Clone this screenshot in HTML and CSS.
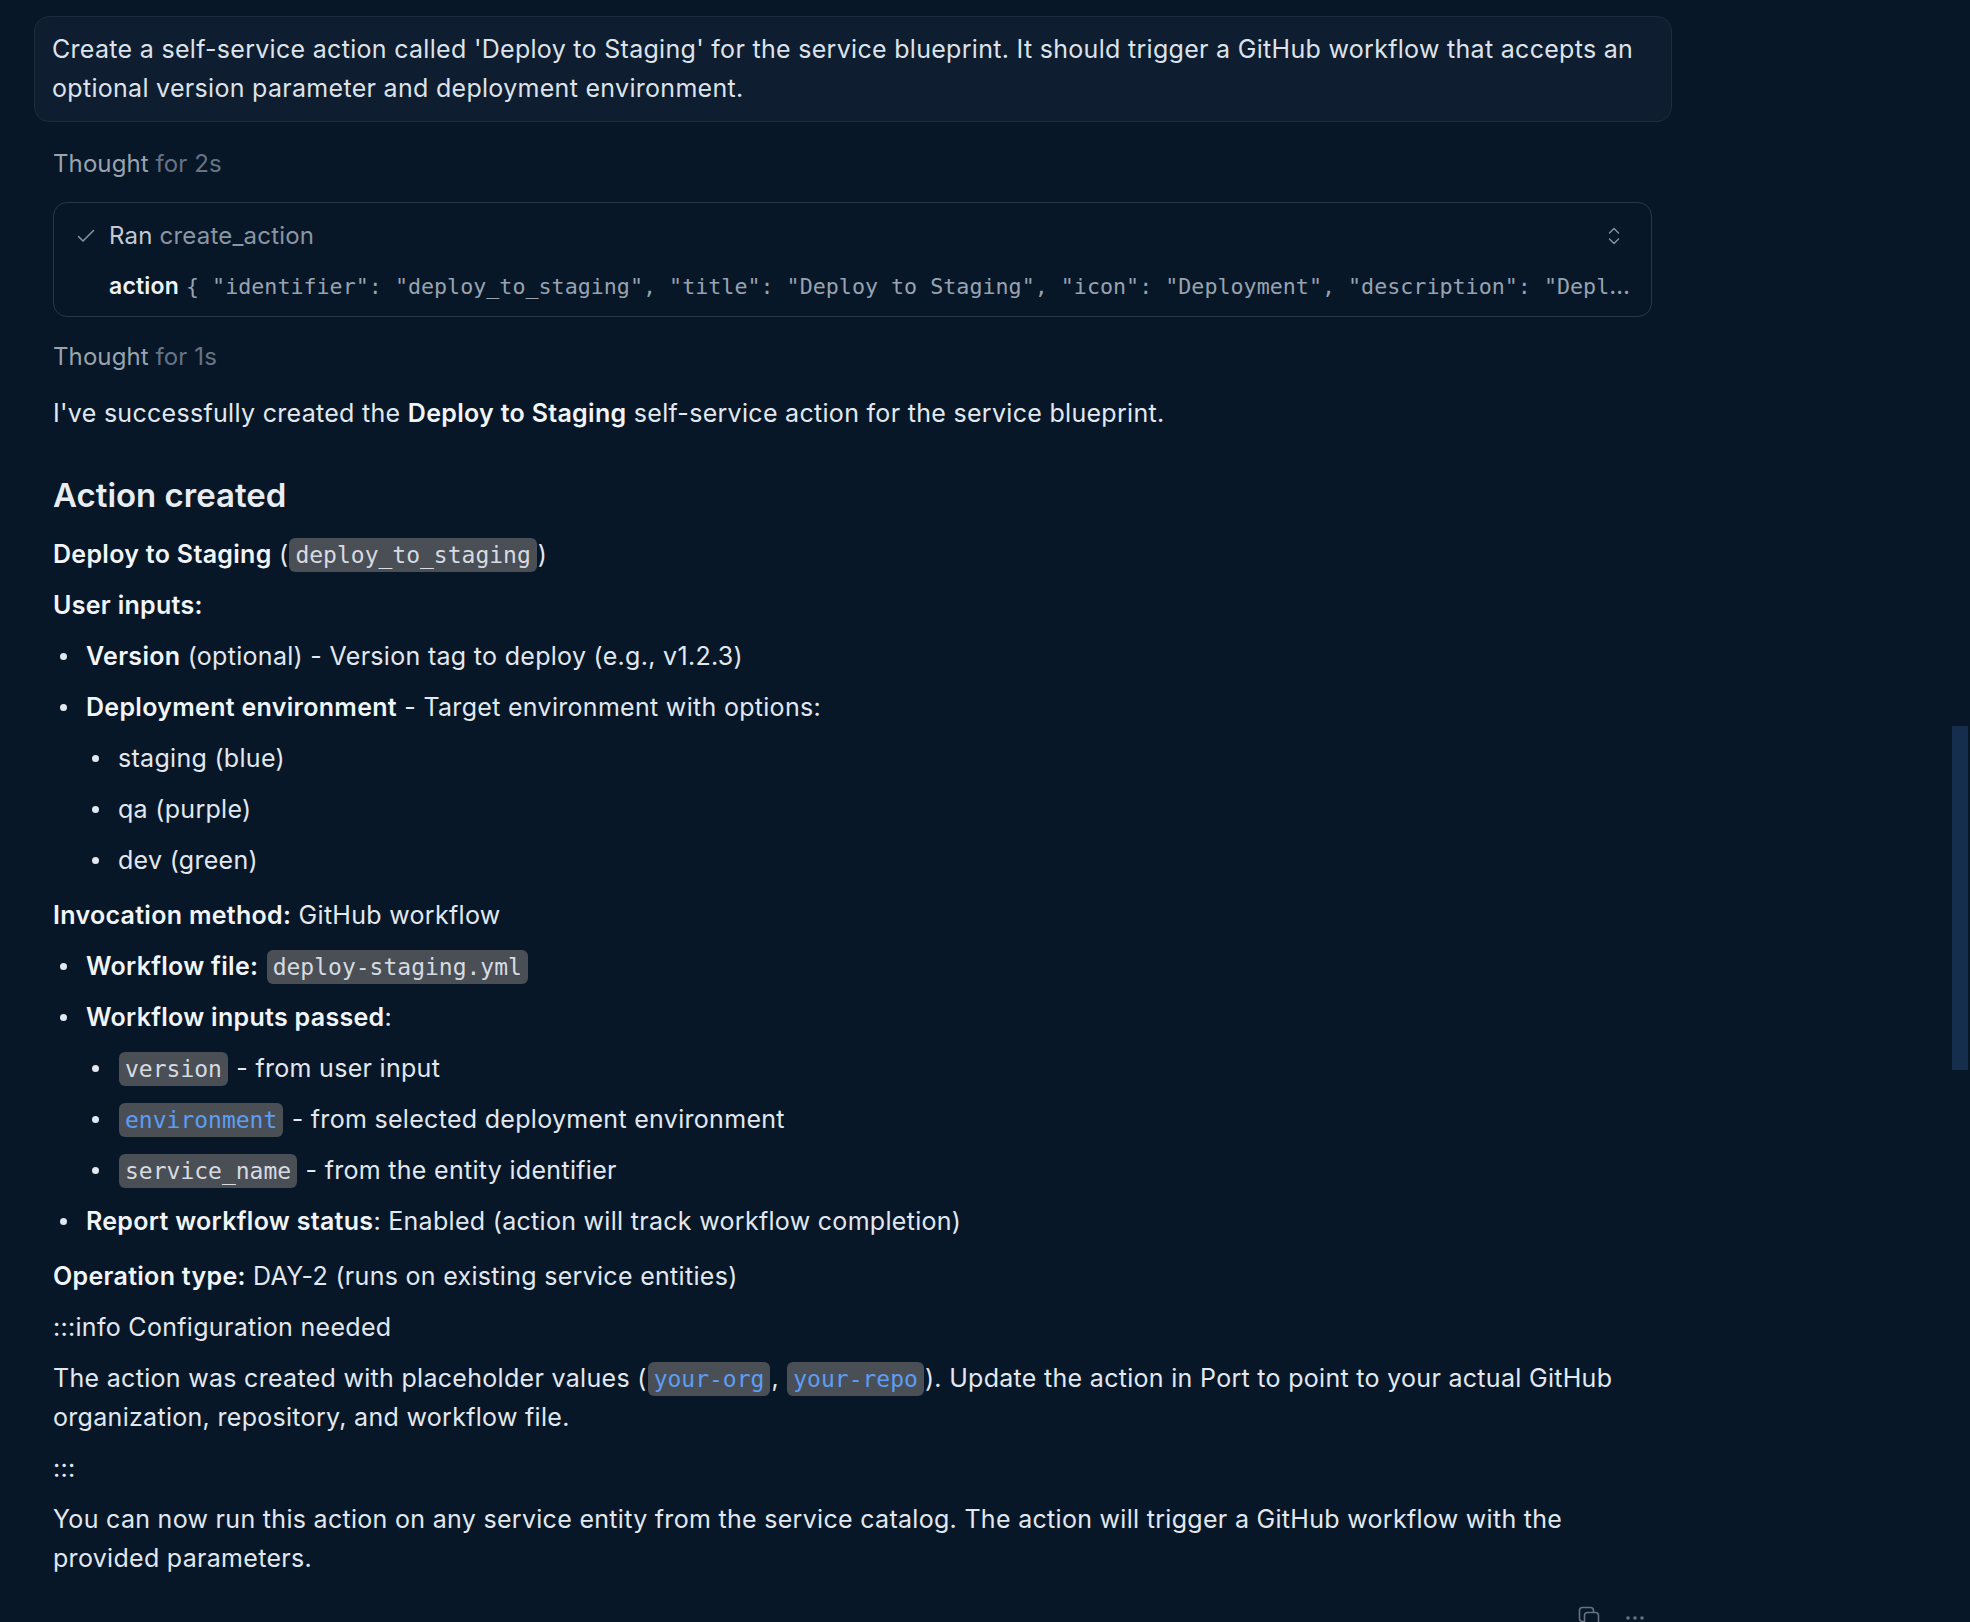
FILE: index.html
```html
<!DOCTYPE html>
<html lang="en">
<head>
    <meta charset="UTF-8">
    <meta name="viewport" content="width=device-width, initial-scale=1.0">
    <title>Deploy to Staging - chat</title>
    <link rel="stylesheet" href="styles.css">
</head>
<body>
    <div class="scroll-thumb"></div>

    <main class="chat">
        <!-- user prompt -->
        <div class="prompt">Create a self-service action called 'Deploy to Staging' for the service blueprint. It should trigger a GitHub workflow that accepts an optional version parameter and deployment environment.</div>

        <div class="reply">
            <div class="thought">Thought <span>for 2s</span></div>

            <!-- tool call -->
            <div class="tool">
                <div class="tool-head">
                    <svg class="tool-check" width="20" height="20" viewBox="0 0 20 20" fill="none" stroke="currentColor" stroke-width="1.5" stroke-linecap="round" stroke-linejoin="round"><polyline points="2.5,10.5 7,15 17.5,4.5"/></svg>
                    <span class="tool-ran">Ran</span>&nbsp;<span class="tool-name">create_action</span>
                    <svg class="tool-toggle" width="14" height="22" viewBox="0 0 14 22" fill="none" stroke="currentColor" stroke-width="1.4" stroke-linecap="round" stroke-linejoin="round"><polyline points="2.5,8 7,3.5 11.5,8"/><polyline points="2.5,14 7,18.5 11.5,14"/></svg>
                </div>
                <div class="tool-args"><b>action</b> <code>{ "identifier": "deploy_to_staging", "title": "Deploy to Staging", "icon": "Deployment", "description": "Deploy the service to the staging environment", "trigger": { "type": "self-service" } }</code></div>
            </div>

            <div class="thought">Thought <span>for 1s</span></div>

            <div class="answer">
                <p>I've successfully created the <strong>Deploy to Staging</strong> self-service action for the service blueprint.</p>

                <h2>Action created</h2>
                <p><strong>Deploy to Staging</strong> (<code>deploy_to_staging</code>)</p>
                <p><strong>User inputs:</strong></p>
                <ul>
                    <li><strong>Version</strong> (optional) - Version tag to deploy (e.g., v1.2.3)</li>
                    <li><strong>Deployment environment</strong> - Target environment with options:
                        <ul>
                            <li>staging (blue)</li>
                            <li>qa (purple)</li>
                            <li>dev (green)</li>
                        </ul>
                    </li>
                </ul>

                <p><strong>Invocation method:</strong> GitHub workflow</p>
                <ul>
                    <li><strong>Workflow file:</strong> <code>deploy-staging.yml</code></li>
                    <li><strong>Workflow inputs passed</strong>:
                        <ul>
                            <li><code>version</code> - from user input</li>
                            <li><code class="ref">environment</code> - from selected deployment environment</li>
                            <li><code>service_name</code> - from the entity identifier</li>
                        </ul>
                    </li>
                    <li><strong>Report workflow status</strong>: Enabled (action will track workflow completion)</li>
                </ul>

                <p><strong>Operation type:</strong> DAY-2 (runs on existing service entities)</p>
                <p>:::info Configuration needed</p>
                <p>The action was created with placeholder values (<code class="ref">your-org</code>, <code class="ref">your-repo</code>). Update the action in Port to point to your actual GitHub organization, repository, and workflow file.</p>
                <p>:::</p>
                <p>You can now run this action on any service entity from the service catalog. The action will trigger a GitHub workflow with the provided parameters.</p>
            </div>

            <!-- message actions -->
            <div class="msg-actions">
                <svg class="copy-icon" width="24" height="24" viewBox="0 0 24 24" fill="none" stroke="currentColor" stroke-width="1.6"><rect x="1.5" y="1.5" width="14" height="14" rx="3"/><rect x="6.5" y="6.5" width="14" height="14" rx="3" fill="#071727"/></svg>
                <svg class="more-icon" width="20" height="6" viewBox="0 0 20 6" fill="currentColor"><circle cx="3" cy="3" r="1.8"/><circle cx="10" cy="3" r="1.8"/><circle cx="17" cy="3" r="1.8"/></svg>
            </div>
        </div>
    </main>
</body>
</html>
```

FILE: styles.css
```css
html, body {
    height: 100%;
    overflow: hidden;
}
body {
    margin: 0;
    background-color: #071727;
    color: #e2e8f0;
    font-family: Inter, "Noto Sans", sans-serif;
    font-size: 25px;
    letter-spacing: 0.3px;
    line-height: 39px;
}
.chat {
    padding: 16px 0 0 34px;
}
/* 사용자 메시지 */
.prompt {
    box-sizing: border-box;
    width: 1638px;
    padding: 13px 17px;
    background-color: #0e1d2f;
    border: 1px solid #1f2c3c;
    border-radius: 15px;
    color: #dde3ea;
}
.reply {
    width: 1599px;
    margin: 22px 0 0 19px;
}
.thought {
    font-size: 24px;
    letter-spacing: 0.1px;
    color: #9aa3ae;
}
.thought span {
    color: #677384;
}
/* 툴 호출 박스 */
.tool {
    margin: 19px 0 20px;
    padding: 13px 16px 10px 22px;
    border: 1px solid #2a3646;
    border-radius: 14px;
    font-size: 24px;
    letter-spacing: 0.2px;
}
.tool-head {
    display: flex;
    align-items: center;
}
.tool-check {
    color: #8b95a3;
    margin-right: 13px;
}
.tool-ran {
    color: #c3cad3;
}
.tool-name {
    color: #8b95a3;
}
.tool-toggle {
    margin-left: auto;
    margin-right: 14px;
    color: #8b95a3;
}
.tool-args {
    margin: 11px 0 0 33px;
    white-space: nowrap;
    overflow: hidden;
    text-overflow: ellipsis;
    color: #98a2b0;
}
.tool-args b {
    color: #eef2f6;
    font-weight: 600;
    font-size: 23px;
}
.tool-args code {
    font-family: "DejaVu Sans Mono", "Liberation Mono", monospace;
    font-size: 21.7px;
    letter-spacing: 0;
    line-height: 1;
}
/* 답변 본문 */
.answer {
    margin-top: 18px;
}
.answer p {
    margin: 0 0 12px;
}
.answer strong {
    font-weight: 600;
    color: #f1f5f9;
}
.answer h2 {
    margin: 43px 0 20px;
    font-size: 33px;
    font-weight: 600;
    letter-spacing: 0;
    line-height: 39px;
    color: #e8edf3;
}
.answer code {
    font-family: "DejaVu Sans Mono", "Liberation Mono", monospace;
    font-size: 23px;
    letter-spacing: 0;
    line-height: 1;
    padding: 4px 6px;
    margin: 0 1px;
    border-radius: 6px;
    background-color: #4a4f56;
    color: #d7dbe0;
}
.answer code.ref {
    color: #5c9df5;
}
.answer ul {
    list-style: none;
    margin: 0 0 16px;
    padding-left: 33px;
}
.answer ul ul {
    margin: 12px 0 0;
    padding-left: 32px;
}
.answer li {
    position: relative;
    margin-bottom: 12px;
}
.answer li:last-child {
    margin-bottom: 0;
}
.answer li::before {
    content: "";
    position: absolute;
    left: -26px;
    top: 16px;
    width: 7px;
    height: 7px;
    border-radius: 50%;
    background-color: #e2e8f0;
}
.msg-actions {
    display: flex;
    justify-content: flex-end;
    align-items: center;
    gap: 23px;
    margin-top: 28px;
    padding-right: 7px;
    color: #677384;
}
.scroll-thumb {
    position: fixed;
    top: 726px;
    right: 2px;
    width: 16px;
    height: 344px;
    background-color: #152e4d;
}
```
